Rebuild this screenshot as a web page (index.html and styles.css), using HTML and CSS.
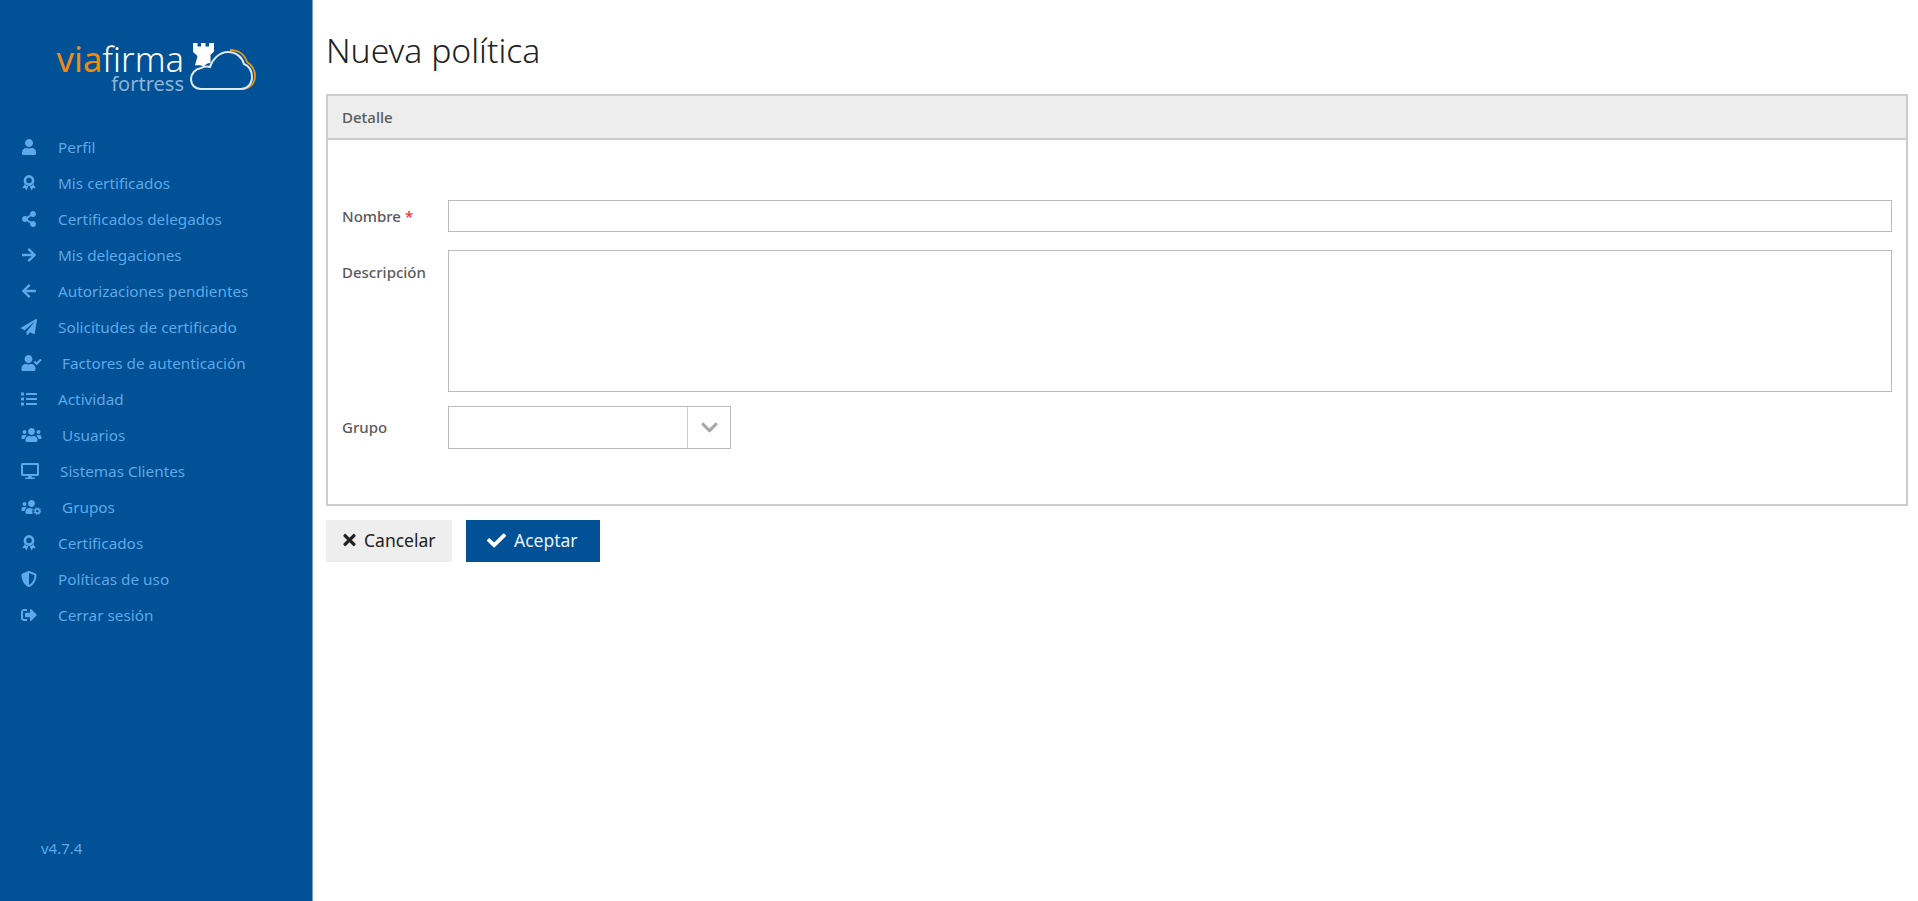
FILE: index.html
```html
<!DOCTYPE html>
<html lang="es">
<head>
<meta charset="utf-8">
<title>Nueva política</title>
<link rel="stylesheet" href="styles.css">
</head>
<body>
<svg class="defs" width="0" height="0">
  <symbol id="i-award" viewBox="0 0 16 18"><circle cx="8" cy="6.200" r="4.600" fill="none" stroke="currentColor" stroke-width="3"/><path d="M3 10.500.5 15l3-.3L5.200 17.500l2-4.500A7 7 0 0 1 3 10.500zM13 10.500 15.500 15l-3-.3-1.700 2.800-2-4.500a7 7 0 0 0 4.200-2.500z" fill="currentColor"/></symbol>
</svg>
<div class="app">
  <aside class="sidebar">
    <div class="logo">
      <div class="logo-text">
        <div class="logo-main"><span class="via">via</span>firma</div>
        <div class="logo-sub">fortress</div>
      </div>
      <svg class="logo-cloud" viewBox="0 0 66 48">
        <path d="M40 7c9 0 15 5 17 12 5 3 8 8 8 14 0 7-5 13-13 13" fill="none" stroke="#e8961e" stroke-width="1.800"/>
        <path d="M11 46C5 46 1 42 1 36c0-5 4-10 10-11 2-1 6-2 9-1 2-7 9-15 18-15 8 0 14 5 16 12 5 2 8 7 8 13 0 7-5 12-11 12z" fill="#005195" stroke="#dfe9f3" stroke-width="2"/>
        <path d="M3 0h4.500v3.500H11V0h4.500v3.500H19V0h5v8.500l-3.500 3.500v8c-3 0-5 1.500-6.500 3.500-3-1.500-6-1.500-9-1l2.500-9.500L3 9z" fill="#fff"/>
      </svg>
    </div>
    <nav class="menu">
      <a class="item"><svg class="ic" viewBox="0 0 448 512"><path d="M224 256c70.700 0 128-57.300 128-128S294.700 0 224 0 96 57.300 96 128s57.300 128 128 128zm89.600 32h-16.700c-22.200 10.200-46.900 16-72.900 16s-50.600-5.800-72.900-16h-16.700C60.200 288 0 348.200 0 422.400V464c0 26.500 21.500 48 48 48h352c26.500 0 48-21.500 48-48v-41.600c0-74.200-60.200-134.400-134.400-134.400z"/></svg><span>Perfil</span></a>
      <a class="item"><svg class="ic"><use href="#i-award"/></svg><span>Mis certificados</span></a>
      <a class="item"><svg class="ic" viewBox="0 0 448 512"><path d="M352 320c-22.608 0-43.387 7.819-59.790 20.895l-102.486-64.054a96.551 96.551 0 0 0 0-41.683l102.486-64.054C308.613 184.181 329.392 192 352 192c53.019 0 96-42.981 96-96S405.019 0 352 0s-96 42.981-96 96c0 7.158.79 14.130 2.276 20.841L155.790 180.895C139.387 167.819 118.608 160 96 160c-53.019 0-96 42.981-96 96s42.981 96 96 96c22.608 0 43.387-7.819 59.790-20.895l102.486 64.054A96.301 96.301 0 0 0 256 416c0 53.019 42.981 96 96 96s96-42.981 96-96-42.981-96-96-96z"/></svg><span>Certificados delegados</span></a>
      <a class="item"><svg class="ic" viewBox="0 0 448 512"><path d="M190.500 66.900l22.200-22.200c9.400-9.400 24.600-9.400 33.900 0L441 239c9.400 9.400 9.400 24.600 0 33.900L246.600 467.300c-9.400 9.400-24.600 9.400-33.900 0l-22.200-22.200c-9.500-9.500-9.300-25 .4-34.300L311.400 296H24c-13.300 0-24-10.700-24-24v-32c0-13.300 10.700-24 24-24h287.400L190.900 101.200c-9.800-9.300-10-24.800-.4-34.300z"/></svg><span>Mis delegaciones</span></a>
      <a class="item"><svg class="ic" viewBox="0 0 448 512"><path d="M257.500 445.100l-22.200 22.200c-9.400 9.400-24.600 9.400-33.900 0L7 273c-9.400-9.400-9.400-24.600 0-33.900L201.400 44.700c9.400-9.400 24.600-9.400 33.900 0l22.200 22.200c9.500 9.500 9.300 25-.4 34.300L136.600 216H424c13.300 0 24 10.700 24 24v32c0 13.300-10.700 24-24 24H136.600l120.500 114.800c9.800 9.300 10 24.800.4 34.300z"/></svg><span>Autorizaciones pendientes</span></a>
      <a class="item"><svg class="ic" viewBox="0 0 512 512"><path d="M476 3.200L12.500 270.600c-18.100 10.400-15.800 35.600 2.200 43.200L121 358.400l287.300-253.200c5.500-4.900 13.300 2.600 8.600 8.300L176 407v80.500c0 23.600 28.500 32.900 42.500 15.800L282 426l124.600 52.200c14.200 6 30.400-2.900 33-18.200l72-432C515 7.800 493.300-6.800 476 3.200z"/></svg><span>Solicitudes de certificado</span></a>
      <a class="item"><svg class="ic ic-w" viewBox="0 0 640 512"><path d="M224 256c70.700 0 128-57.300 128-128S294.700 0 224 0 96 57.300 96 128s57.300 128 128 128zm89.600 32h-16.700c-22.200 10.200-46.900 16-72.900 16s-50.600-5.800-72.900-16h-16.700C60.200 288 0 348.200 0 422.400V464c0 26.500 21.500 48 48 48h352c26.500 0 48-21.500 48-48v-41.600c0-74.200-60.200-134.400-134.400-134.400zm323-128.400l-27.800-28.100c-4.600-4.700-12.100-4.700-16.800-.1l-104.800 104-45.500-45.800c-4.600-4.700-12.100-4.700-16.800-.1l-28.100 27.900c-4.700 4.600-4.700 12.100-.1 16.800l81.700 82.300c4.600 4.700 12.100 4.700 16.800.1l141.300-140.200c4.600-4.700 4.700-12.200.1-16.800z"/></svg><span>Factores de autenticación</span></a>
      <a class="item"><svg class="ic" viewBox="0 0 512 512"><path d="M80 368H16a16 16 0 0 0-16 16v64a16 16 0 0 0 16 16h64a16 16 0 0 0 16-16v-64a16 16 0 0 0-16-16zm0-320H16A16 16 0 0 0 0 64v64a16 16 0 0 0 16 16h64a16 16 0 0 0 16-16V64a16 16 0 0 0-16-16zm0 160H16a16 16 0 0 0-16 16v64a16 16 0 0 0 16 16h64a16 16 0 0 0 16-16v-64a16 16 0 0 0-16-16zm416 176H176a16 16 0 0 0-16 16v32a16 16 0 0 0 16 16h320a16 16 0 0 0 16-16v-32a16 16 0 0 0-16-16zm0-320H176a16 16 0 0 0-16 16v32a16 16 0 0 0 16 16h320a16 16 0 0 0 16-16V80a16 16 0 0 0-16-16zm0 160H176a16 16 0 0 0-16 16v32a16 16 0 0 0 16 16h320a16 16 0 0 0 16-16v-32a16 16 0 0 0-16-16z"/></svg><span>Actividad</span></a>
      <a class="item"><svg class="ic ic-w" viewBox="0 0 640 512"><path d="M96 224c35.300 0 64-28.700 64-64s-28.700-64-64-64-64 28.700-64 64 28.700 64 64 64zm448 0c35.300 0 64-28.700 64-64s-28.700-64-64-64-64 28.700-64 64 28.700 64 64 64zm32 32h-64c-17.600 0-33.500 7.100-45.100 18.600 40.300 22.100 68.900 62 75.100 109.400h66c17.700 0 32-14.300 32-32v-32c0-35.300-28.700-64-64-64zm-256 0c61.900 0 112-50.100 112-112S381.900 32 320 32 208 82.100 208 144s50.100 112 112 112zm76.800 32h-8.300c-20.800 10-43.900 16-68.500 16s-47.600-6-68.500-16h-8.300C179.600 288 128 339.600 128 403.200V432c0 26.500 21.500 48 48 48h288c26.500 0 48-21.500 48-48v-28.800c0-63.600-51.600-115.200-115.200-115.200zm-223.700-13.400C161.500 263.100 145.600 256 128 256H64c-35.300 0-64 28.700-64 64v32c0 17.700 14.300 32 32 32h65.900c6.300-47.400 34.900-87.300 75.200-109.400z"/></svg><span>Usuarios</span></a>
      <a class="item"><svg class="ic ic-m" viewBox="0 0 576 512"><path d="M528 0H48C21.500 0 0 21.500 0 48v320c0 26.500 21.500 48 48 48h192l-16 48h-72c-13.300 0-24 10.700-24 24s10.700 24 24 24h272c13.300 0 24-10.700 24-24s-10.700-24-24-24h-72l-16-48h192c26.500 0 48-21.500 48-48V48c0-26.500-21.500-48-48-48zm-16 352H64V64h448v288z"/></svg><span>Sistemas Clientes</span></a>
      <a class="item"><svg class="ic ic-w" viewBox="0 0 640 512"><path d="M96 224c35.300 0 64-28.700 64-64s-28.700-64-64-64-64 28.700-64 64 28.700 64 64 64zm224 32c61.900 0 112-50.100 112-112S381.900 32 320 32 208 82.100 208 144s50.100 112 112 112zm-160.900 18.600C161.500 263.100 145.600 256 128 256H64c-35.300 0-64 28.700-64 64v32c0 17.700 14.300 32 32 32h65.900c6.300-47.400 34.900-87.300 75.200-109.400zM176 480h190c-26-44-30-110 4-186-16 6-32 10-50 10-24 0-48-6-68-16h-8C180 288 128 340 128 403v29c0 26.500 21.500 48 48 48z"/><circle class="gear-ring" cx="505" cy="385" r="68"/><circle class="gear-teeth" cx="505" cy="385" r="108"/></svg><span>Grupos</span></a>
      <a class="item"><svg class="ic"><use href="#i-award"/></svg><span>Certificados</span></a>
      <a class="item"><svg class="ic" viewBox="0 0 512 512"><path d="M466.500 83.700l-192-80a48.150 48.150 0 0 0-36.900 0l-192 80C27.700 91.100 16 108.600 16 128c0 198.500 114.500 335.700 221.500 380.300 11.800 4.900 25.100 4.900 36.900 0C360.100 472.600 496 349.300 496 128c0-19.400-11.700-36.900-29.500-44.300zM256.100 446.300l-.1-381 175.900 73.300c-3.300 151.400-82.100 261.100-175.800 307.700z"/></svg><span>Políticas de uso</span></a>
      <a class="item"><svg class="ic" viewBox="0 0 512 512"><path d="M497 273L329 441c-15 15-41 4.500-41-17v-96H152c-13.300 0-24-10.700-24-24v-96c0-13.300 10.700-24 24-24h136V88c0-21.400 25.900-32 41-17l168 168c9.300 9.400 9.300 24.600 0 34zM192 436v-40c0-6.600-5.400-12-12-12H96c-17.700 0-32-14.300-32-32V160c0-17.700 14.300-32 32-32h84c6.600 0 12-5.400 12-12V76c0-6.600-5.400-12-12-12H96c-53 0-96 43-96 96v192c0 53 43 96 96 96h84c6.600 0 12-5.400 12-12z"/></svg><span>Cerrar sesión</span></a>
    </nav>
    <div class="version">v4.7.4</div>
  </aside>
  <main class="content">
    <h1 class="title">Nueva política</h1>
    <section class="panel">
      <header class="panel-head">Detalle</header>
      <form class="form">
        <label class="lbl lbl-input">Nombre <span class="req">*</span></label>
        <input class="field" type="text">
        <label class="lbl lbl-area">Descripción</label>
        <textarea class="field area"></textarea>
        <label class="lbl lbl-select">Grupo</label>
        <div class="combo">
          <div class="combo-value"></div>
          <div class="combo-btn"><svg class="chev" viewBox="0 0 448 512"><path d="M207.029 381.476L12.686 187.132c-9.373-9.373-9.373-24.569 0-33.941l22.667-22.667c9.357-9.357 24.522-9.375 33.901-.04L224 284.505l154.745-154.021c9.379-9.335 24.544-9.317 33.901.04l22.667 22.667c9.373 9.373 9.373 24.569 0 33.941L240.971 381.476c-9.373 9.372-24.569 9.372-33.942 0z"/></svg></div>
        </div>
      </form>
    </section>
    <div class="actions">
      <button class="btn btn-cancel" type="button"><svg class="btn-ic-x" viewBox="0 0 352 512"><path d="M242.720 256l100.070-100.070c12.280-12.280 12.280-32.190 0-44.480l-22.240-22.240c-12.280-12.280-32.190-12.280-44.480 0L176 189.280 75.930 89.210c-12.280-12.280-32.190-12.280-44.480 0L9.210 111.450c-12.280 12.280-12.280 32.190 0 44.480L109.280 256 9.210 356.070c-12.280 12.280-12.280 32.190 0 44.480l22.240 22.240c12.280 12.280 32.200 12.280 44.480 0L176 322.720l100.070 100.070c12.280 12.280 32.200 12.280 44.480 0l22.240-22.240c12.280-12.280 12.280-32.190 0-44.480L242.720 256z"/></svg>Cancelar</button>
      <button class="btn btn-ok" type="button"><svg class="btn-ic-c" viewBox="0 0 512 512"><path d="M173.898 439.404l-166.400-166.400c-9.997-9.997-9.997-26.206 0-36.204l36.203-36.204c9.997-9.998 26.207-9.998 36.204 0L192 312.690 432.095 72.596c9.997-9.997 26.207-9.997 36.204 0l36.203 36.204c9.997 9.997 9.997 26.206 0 36.204l-294.400 294.401c-9.998 9.997-26.207 9.997-36.204-.001z"/></svg>Aceptar</button>
    </div>
  </main>
</div>
</body>
</html>
```
FILE: styles.css
```css
* { box-sizing: border-box; }
html, body { height: 100%; margin: 0; }
body { font-family: "Noto Sans", "Open Sans", sans-serif; background: #fff; color: #555; overflow: hidden; }
.defs { position: absolute; }
.app { display: flex; height: 100%; }

.sidebar { width: 313px; flex: none; background: #005195; border-right: 1px solid #6f9fc8; display: flex; flex-direction: column; color: #5fa8ea; }
.logo { display: flex; align-items: flex-start; gap: 6px; height: 129px; padding: 41px 0 0 56px; }
.logo-text { width: 128px; text-align: right; }
.logo-main { font-size: 34.500px; line-height: 36px; color: #fff; font-weight: 300; white-space: nowrap; }
.via { color: #f08a12; font-weight: 400; }
.logo-sub { font-size: 20px; line-height: 18px; margin-top: -2px; color: #8fb4d4; }
.logo-cloud { width: 66px; height: 48px; margin-top: 2px; flex: none; }

.menu { display: flex; flex-direction: column; }
.item { display: flex; align-items: center; height: 36px; padding-left: 21px; font-size: 15.300px; color: #5fa8ea; }
.ic { width: 16px; height: 16px; margin-right: 21px; fill: currentColor; color: #5fa8ea; flex: none; }
.ic-w { width: 21px; margin-right: 20px; }
.ic-m { width: 18px; margin-right: 21px; }
.gear-ring { fill: none; stroke: currentColor; stroke-width: 52px; }
.gear-teeth { fill: none; stroke: currentColor; stroke-width: 34px; stroke-dasharray: 44 40.800; }
.version { margin-top: auto; padding: 0 0 43px 41px; font-size: 15px; color: #5fa8ea; }

.content { flex: 1; min-width: 0; padding: 0 10px 0 13px; }
.title { margin: 0; height: 94px; padding-top: 26px; font-size: 33.700px; line-height: 48px; font-weight: 300; color: #222; }
.panel { border: 2px solid #ccc; height: 412px; }
.panel-head { height: 44px; background: #ededed; border-bottom: 2px solid #ccc; padding-left: 14px; font-size: 15px; line-height: 42px; font-weight: 500; color: #5a5a5a; }
.form { display: grid; grid-template-columns: 106px 1fr; padding: 60px 14px 0 14px; row-gap: 18px; align-items: start; font-size: 15px; }
.lbl { font-weight: 500; color: #5a5a5a; }
.lbl-input { line-height: 32px; }
.lbl-area { line-height: 44px; }
.lbl-select { line-height: 43px; }
.req { color: #e33; }
.field { display: block; width: 100%; height: 32px; border: 1px solid #bbb; background: #fff; border-radius: 0; margin: 0; padding: 0; outline: 0; resize: none; }
.area { height: 142px; margin-bottom: -4px; }
.combo { display: flex; width: 283px; height: 43px; border: 1px solid #bbb; }
.combo-value { flex: 1; }
.combo-btn { width: 43px; border-left: 1px solid #ccc; display: flex; align-items: center; justify-content: center; }
.chev { width: 17px; height: 19px; fill: #a8a8a8; }

.actions { display: flex; gap: 14px; margin-top: 14px; }
.btn { display: flex; align-items: center; height: 42px; border: 0; padding: 0 0 2px; font-family: inherit; font-size: 17.500px; border-radius: 0; }
.btn-cancel { width: 126px; background: #eee; color: #222; padding-left: 16px; }
.btn-ok { width: 134px; background: #005195; color: #e8f0f8; padding-left: 21px; }
.btn-ic-x { width: 15px; height: 18px; margin-right: 7px; fill: #222; }
.btn-ic-c { width: 19px; height: 19px; margin-right: 8px; fill: #fff; }
```
